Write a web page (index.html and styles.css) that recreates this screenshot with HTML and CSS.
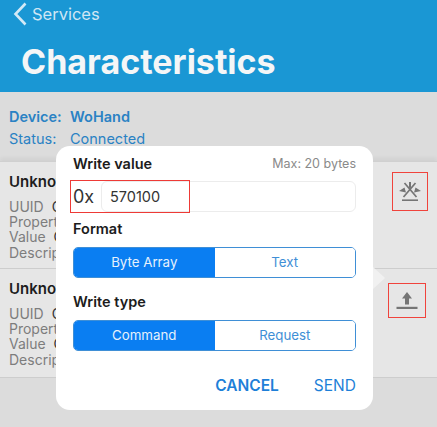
FILE: index.html
```html
<!DOCTYPE html>
<html lang="en">
<head>
    <meta charset="UTF-8">
    <title>Characteristics</title>
    <link rel="stylesheet" href="styles.css">
</head>
<body>
    <div class="screen">
        <header class="header">
            <div class="nav">
                <svg class="back" width="14" height="24" viewBox="0 0 14 24"><path d="M12.500 1.500L2.500 12l10 10.500" fill="none" stroke="#d3e9f6" stroke-width="2.6"/></svg>
                <span>Services</span>
            </div>
            <h1>Characteristics</h1>
        </header>

        <div class="device">
            <div class="device-row strong"><span class="device-key">Device:</span><span>WoHand</span></div>
            <div class="device-row"><span class="device-key">Status:</span><span>Connected</span></div>
        </div>

        <div class="list">
            <div class="item item-first">
                <div class="item-title">Unknown</div>
                <div class="item-line">UUID <b>C</b></div>
                <div class="item-line">Properties</div>
                <div class="item-line">Value <b>C</b></div>
                <div class="item-line">Descriptors</div>
                <div class="item-icon icon-first">
                    <svg width="22" height="19" viewBox="0 0 22 19" fill="#757575">
                        <path d="M5.500 1L17.500 15M16.500 1L4.500 15" stroke="#757575" stroke-width="1.7" fill="none"/>
                        <path d="M10 0h2v5.500l-1 1.500-1-1.500zM0 9l5.500-3.500 1.500 5zM22 9l-5.500-3.500-1.500 5z"/>
                        <path d="M3 19v-1.600h16V19z"/>
                    </svg>
                </div>
            </div>
            <div class="item">
                <div class="item-title">Unknown</div>
                <div class="item-line">UUID <b>C</b></div>
                <div class="item-line">Properties</div>
                <div class="item-line">Value <b>C</b></div>
                <div class="item-line">Descriptors</div>
                <div class="item-icon icon-second">
                    <svg width="22" height="17" viewBox="0 0 22 17" fill="#757575">
                        <path d="M11 0l5 6.500h-3V12.500H9V6.500H6z"/>
                        <path d="M.5 14.800h21V17H.5z"/>
                    </svg>
                </div>
            </div>
        </div>

        <div class="dialog">
            <span class="dialog-arrow"></span>
            <div class="dialog-head">
                <span class="label">Write value</span>
                <span class="max">Max: 20 bytes</span>
            </div>
            <div class="value-row">
                <span class="prefix">0x</span>
                <span class="value-input">570100</span>
                <span class="mark"></span>
            </div>
            <div class="label label-format">Format</div>
            <div class="segment">
                <span class="segment-item active">Byte Array</span>
                <span class="segment-item">Text</span>
            </div>
            <div class="label label-type">Write type</div>
            <div class="segment">
                <span class="segment-item active">Command</span>
                <span class="segment-item">Request</span>
            </div>
            <div class="actions">
                <span class="cancel">CANCEL</span>
                <span class="send">SEND</span>
            </div>
        </div>
    </div>
</body>
</html>
```
FILE: styles.css
```css
* {
    box-sizing: border-box;
}
html, body {
    margin: 0;
    height: 100%;
    overflow: hidden;
}
body {
    font-family: Inter, "Liberation Sans", sans-serif;
}
.screen {
    position: relative;
    width: 437px;
    height: 427px;
    overflow: hidden;
    background: #dcdcdc;
}
.header {
    height: 92px;
    background: #1a97d4;
    padding-left: 13px;
}
.nav {
    display: flex;
    align-items: center;
    gap: 5px;
    height: 28px;
    color: #cfe6f4;
    font-size: 16.5px;
}
.header h1 {
    margin: 14px 0 0 8px;
    font-size: 34px;
    line-height: 40px;
    font-weight: 700;
    color: #f4f6f7;
    letter-spacing: 0;
}
.device {
    height: 69px;
    padding: 14px 0 0 9px;
    font-size: 14.5px;
    color: #2a82c4;
}
.device-row {
    display: flex;
    height: 22px;
    line-height: 22px;
}
.device-row.strong {
    font-weight: 600;
}
.device-key {
    width: 61px;
}
.list {
    background: #e6e6e6;
    border-top: 1px solid #d0d0d0;
    box-shadow: 0 -3px 4px rgba(0, 0, 0, 0.05);
}
.item {
    position: relative;
    height: 109px;
    padding: 11px 0 0 9px;
    border-bottom: 1px solid #cdcdcd;
    font-size: 14px;
    color: #7d7d7d;
}
.item-first {
    height: 107px;
}
.item-title {
    height: 26px;
    font-size: 15px;
    font-weight: 600;
    line-height: 18px;
    color: #1d1d1d;
}
.item-line {
    height: 15.2px;
    line-height: 15px;
}
.item-line b {
    margin-left: 4px;
    font-weight: 400;
    color: #333;
}
.item-icon {
    position: absolute;
    display: flex;
    align-items: center;
    justify-content: center;
    border: 1px solid #f0433c;
}
.icon-first {
    left: 392px;
    top: 10px;
    width: 36px;
    height: 39px;
}
.icon-second {
    left: 388px;
    top: 14px;
    width: 38px;
    height: 35px;
}
.dialog {
    position: absolute;
    left: 56px;
    top: 146px;
    width: 317px;
    height: 264px;
    padding: 0 17px;
    background: #fff;
    border-radius: 14px;
}
.dialog-arrow {
    position: absolute;
    left: 317px;
    top: 121px;
    width: 12px;
    height: 22px;
    clip-path: polygon(0 0, 100% 50%, 0 100%);
    background: #f1f1f1;
}
.dialog-head {
    display: flex;
    justify-content: space-between;
    align-items: center;
    height: 34px;
}
.label {
    font-size: 14.5px;
    font-weight: 600;
    color: #1c1c1c;
}
.max {
    font-size: 12.5px;
    color: #8a8a8a;
}
.value-row {
    position: relative;
    display: flex;
    align-items: center;
    height: 31px;
    margin-top: 1px;
}
.prefix {
    width: 28px;
    font-size: 18px;
    color: #333;
}
.value-input {
    flex: 1;
    height: 31px;
    padding-left: 8px;
    line-height: 30px;
    font-size: 14.5px;
    color: #333;
    border: 1px solid #ececec;
    border-radius: 6px;
}
.mark {
    position: absolute;
    left: -3px;
    top: -1px;
    width: 120px;
    height: 33px;
    border: 1.5px solid #ee3a36;
}
.label-format {
    height: 35px;
    line-height: 34px;
}
.label-type {
    height: 42px;
    padding-top: 15px;
    line-height: 18px;
}
.segment {
    display: flex;
    height: 31px;
    border: 1px solid #3f8fd6;
    border-radius: 5px;
    overflow: hidden;
}
.segment-item {
    flex: 1;
    text-align: center;
    line-height: 29px;
    font-size: 13.3px;
    color: #3f8fd6;
    background: #fff;
}
.segment-item.active {
    color: #e6f1fc;
    background: #0a7ef2;
}
.actions {
    display: flex;
    justify-content: flex-end;
    gap: 35px;
    margin-top: 25px;
    font-size: 15.5px;
    color: #1e7fd8;
}
.cancel {
    font-weight: 600;
}
```
